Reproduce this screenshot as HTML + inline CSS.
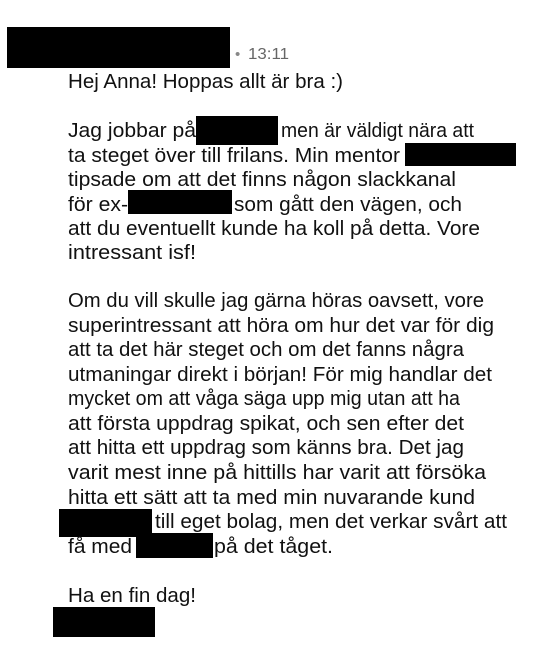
<!DOCTYPE html>
<html><head><meta charset="utf-8"><style>
html,body{margin:0;padding:0;background:#fff;width:540px;height:653px;overflow:hidden}
svg{display:block}
text{font-family:"Liberation Sans",Arial,sans-serif;font-size:20px;fill:#111}
</style></head><body>
<svg width="540" height="653" viewBox="0 0 540 653" xmlns="http://www.w3.org/2000/svg">
<rect x="7" y="27" width="223" height="41" fill="#000"/>
<text x="235" y="59" style="font-size:15px;fill:#888">•</text>
<text x="248" y="59" textLength="41" lengthAdjust="spacingAndGlyphs" style="font-size:16px;fill:#666">13:11</text>
<text x="68" y="88" textLength="275" lengthAdjust="spacingAndGlyphs">Hej Anna! Hoppas allt är bra :)</text>
<text x="68" y="137" textLength="128" lengthAdjust="spacingAndGlyphs">Jag jobbar på</text>
<rect x="196" y="116" width="82" height="29" fill="#000"/>
<text x="281" y="137" textLength="193" lengthAdjust="spacingAndGlyphs">men är väldigt nära att</text>
<text x="68" y="162" textLength="332" lengthAdjust="spacingAndGlyphs">ta steget över till frilans. Min mentor</text>
<rect x="405" y="143" width="111" height="23" fill="#000"/>
<text x="68" y="186" textLength="388" lengthAdjust="spacingAndGlyphs">tipsade om att det finns någon slackkanal</text>
<text x="68" y="211" textLength="60" lengthAdjust="spacingAndGlyphs">för ex-</text>
<rect x="128" y="190" width="104" height="24" fill="#000"/>
<text x="234" y="211" textLength="228" lengthAdjust="spacingAndGlyphs">som gått den vägen, och</text>
<text x="68" y="235" textLength="412" lengthAdjust="spacingAndGlyphs">att du eventuellt kunde ha koll på detta. Vore</text>
<text x="68" y="259" textLength="128" lengthAdjust="spacingAndGlyphs">intressant isf!</text>
<text x="68" y="307" textLength="416" lengthAdjust="spacingAndGlyphs">Om du vill skulle jag gärna höras oavsett, vore</text>
<text x="68" y="332" textLength="426" lengthAdjust="spacingAndGlyphs">superintressant att höra om hur det var för dig</text>
<text x="68" y="356" textLength="396" lengthAdjust="spacingAndGlyphs">att ta det här steget och om det fanns några</text>
<text x="68" y="381" textLength="424" lengthAdjust="spacingAndGlyphs">utmaningar direkt i början! För mig handlar det</text>
<text x="68" y="405" textLength="392" lengthAdjust="spacingAndGlyphs">mycket om att våga säga upp mig utan att ha</text>
<text x="68" y="430" textLength="396" lengthAdjust="spacingAndGlyphs">att första uppdrag spikat, och sen efter det</text>
<text x="68" y="454" textLength="396" lengthAdjust="spacingAndGlyphs">att hitta ett uppdrag som känns bra. Det jag</text>
<text x="68" y="479" textLength="418" lengthAdjust="spacingAndGlyphs">varit mest inne på hittills har varit att försöka</text>
<text x="68" y="504" textLength="407" lengthAdjust="spacingAndGlyphs">hitta ett sätt att ta med min nuvarande kund</text>
<rect x="59" y="509" width="93" height="28" fill="#000"/>
<text x="155" y="528" textLength="352" lengthAdjust="spacingAndGlyphs">till eget bolag, men det verkar svårt att</text>
<text x="68" y="553" textLength="64" lengthAdjust="spacingAndGlyphs">få med</text>
<rect x="136" y="533" width="77" height="25" fill="#000"/>
<text x="214" y="553" textLength="119" lengthAdjust="spacingAndGlyphs">på det tåget.</text>
<text x="68" y="602" textLength="128" lengthAdjust="spacingAndGlyphs">Ha en fin dag!</text>
<rect x="53" y="607" width="102" height="30" fill="#000"/>
</svg>
</body></html>
